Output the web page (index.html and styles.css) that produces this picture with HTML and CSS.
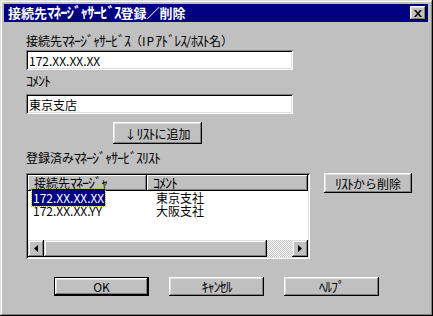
FILE: index.html
```html
<!DOCTYPE html>
<html lang="ja">
<head>
    <meta charset="UTF-8">
    <title>接続先ﾏﾈｰｼﾞｬｻｰﾋﾞｽ登録／削除</title>
    <link rel="stylesheet" href="styles.css">
</head>
<body>

<div class="dialog">
    <!-- Title bar -->
    <div class="titlebar">
        <span class="title">接続先<span class="hk">ﾏﾈｰｼﾞｬｻｰﾋﾞｽ</span>登録／削除</span>
        <button class="close-btn" aria-label="閉じる">
            <svg width="8" height="7" viewBox="0 0 8 7">
                <path d="M0 0h2l2 2.5 2-2.5h2l-3 3.5 3 3.5h-2l-2-2.5-2 2.5h-2l3-3.5z" fill="#000"/>
            </svg>
        </button>
    </div>

    <div class="content">
        <div class="label label-host">接続先<span class="hk">ﾏﾈｰｼﾞｬｻｰﾋﾞｽ</span>（<span class="ip">IP</span><span class="hk">ｱﾄﾞﾚｽ</span>/<span class="hk">ﾎｽﾄ</span>名）</div>
        <input class="field field-host" type="text" value="172.XX.XX.XX">

        <div class="label label-comment"><span class="hk">ｺﾒﾝﾄ</span></div>
        <input class="field field-comment" type="text" value="東京支店">

        <button class="btn btn-add">↓<span class="hk">ﾘｽﾄ</span>に追加</button>

        <div class="label label-list">登録済み<span class="hk">ﾏﾈｰｼﾞｬｻｰﾋﾞｽﾘｽﾄ</span></div>

        <div class="list-row">
            <div class="listview">
                <div class="lv-head">
                    <div class="lv-col col-host">接続先<span class="hk">ﾏﾈｰｼﾞｬ</span></div>
                    <div class="lv-col col-comment"><span class="hk">ｺﾒﾝﾄ</span></div>
                </div>
                <div class="lv-body">
                    <div class="lv-item">
                        <div class="col-host"><span class="selected">172.XX.XX.XX</span></div>
                        <div class="col-comment">東京支社</div>
                    </div>
                    <div class="lv-item">
                        <div class="col-host"><span>172.XX.XX.YY</span></div>
                        <div class="col-comment">大阪支社</div>
                    </div>
                </div>
                <div class="hscroll">
                    <div class="sb-btn">
                        <svg width="4" height="7" viewBox="0 0 4 7"><path d="M4 0v7L0 3.5z" fill="#000"/></svg>
                    </div>
                    <div class="sb-thumb"></div>
                    <div class="sb-track"></div>
                    <div class="sb-btn">
                        <svg width="4" height="7" viewBox="0 0 4 7"><path d="M0 0v7l4-3.5z" fill="#000"/></svg>
                    </div>
                </div>
            </div>
            <button class="btn btn-remove"><span class="hk">ﾘｽﾄ</span>から削除</button>
        </div>

        <div class="buttons">
            <button class="btn btn-default">OK</button>
            <button class="btn"><span class="hk">ｷｬﾝｾﾙ</span></button>
            <button class="btn"><span class="hk">ﾍﾙﾌﾟ</span></button>
        </div>
    </div>
</div>

</body>
</html>
```

FILE: styles.css
```css
body {
    margin: 0;
    padding: 0;
    font-family: "Noto Sans CJK JP", "Noto Sans", sans-serif;
    font-size: 12px;
    background-color: #c0c0c0;
}

.hk {
    font-size: 14px;
    letter-spacing: -1px;
    line-height: 1;
}

.ip {
    letter-spacing: 1px;
}

/* Dialog window with the raised 3D frame */
.dialog {
    width: 433px;
    height: 316px;
    box-sizing: border-box;
    padding: 4px 5px 0 4px;
    background-color: #c0c0c0;
    box-shadow: inset -1px -1px #000, inset 1px 1px #dfdfdf,
                inset -2px -2px #808080, inset 2px 2px #fff;
}

.titlebar {
    display: flex;
    justify-content: space-between;
    align-items: center;
    height: 18px;
    background-color: #000080;
    padding: 0 2px 0 4px;
}

.title {
    color: #fff;
    font-weight: bold;
    font-size: 13px;
    line-height: 18px;
}

.title .hk {
    font-size: 15px;
    letter-spacing: -1px;
}

.close-btn {
    width: 16px;
    height: 14px;
    padding: 0;
    border: none;
    display: flex;
    align-items: center;
    justify-content: center;
    background-color: #c0c0c0;
    box-shadow: inset -1px -1px #000, inset 1px 1px #fff,
                inset -2px -2px #808080, inset 2px 2px #dfdfdf;
}

.content {
    padding-left: 22px;
}

.label {
    height: 14px;
    line-height: 14px;
    color: #000;
}

.label-host {
    margin-top: 11px;
}

.label-comment {
    margin-top: 3px;
}

.label-list {
    margin-top: 6px;
}

/* Sunken edit fields */
.field {
    display: block;
    width: 267px;
    height: 20px;
    box-sizing: border-box;
    margin: 3px 0 0 0;
    padding: 0 3px;
    border: none;
    outline: none;
    font-family: inherit;
    font-size: 12px;
    color: #000;
    background-color: #fff;
    box-shadow: inset 1px 1px #808080, inset -1px -1px #fff,
                inset 2px 2px #000, inset -2px -2px #dfdfdf;
}

.field-comment {
    margin-top: 7px;
}

.btn {
    height: 20px;
    padding: 0;
    border: none;
    font-family: inherit;
    font-size: 12px;
    line-height: 14px;
    color: #000;
    background-color: #c0c0c0;
    box-shadow: inset -1px -1px #000, inset 1px 1px #fff,
                inset -2px -2px #808080, inset 2px 2px #dfdfdf;
}

.btn-add {
    display: block;
    width: 89px;
    height: 22px;
    margin: 8px 0 0 87px;
}

.btn-default {
    box-shadow: inset 0 0 0 1px #000, inset -2px -2px #000, inset 2px 2px #fff,
                inset -3px -3px #808080, inset 3px 3px #dfdfdf;
}

.list-row {
    display: flex;
    align-items: flex-start;
    margin-top: 9px;
}

/* List view */
.listview {
    width: 284px;
    height: 86px;
    box-sizing: border-box;
    padding: 2px;
    display: flex;
    flex-direction: column;
    background-color: #fff;
    box-shadow: inset 1px 1px #808080, inset -1px -1px #fff,
                inset 2px 2px #000, inset -2px -2px #dfdfdf;
}

.lv-head {
    display: flex;
    height: 16px;
}

.lv-col {
    box-sizing: border-box;
    height: 16px;
    line-height: 16px;
    padding-left: 6px;
    background-color: #c0c0c0;
    box-shadow: inset -1px -1px #000, inset 1px 1px #fff,
                inset -2px -2px #808080;
}

.col-host {
    width: 119px;
}

.col-comment {
    flex: 1;
}

.lv-body {
    flex: 1;
}

.lv-item {
    display: flex;
    height: 13px;
    line-height: 13px;
}

.lv-item .col-host {
    padding-left: 4px;
}

.lv-item .col-comment {
    padding-left: 5px;
}

.lv-item span {
    padding: 0 1px;
}

.selected {
    background-color: #000080;
    color: #fff;
    outline: 1px dotted #c0c000;
}

/* Horizontal scroll bar */
.hscroll {
    display: flex;
    height: 17px;
}

.sb-btn {
    width: 16px;
    display: flex;
    align-items: center;
    justify-content: center;
    background-color: #c0c0c0;
    box-shadow: inset -1px -1px #000, inset 1px 1px #dfdfdf,
                inset -2px -2px #808080, inset 2px 2px #fff;
}

.sb-thumb {
    width: 223px;
    background-color: #c0c0c0;
    box-shadow: inset -1px -1px #000, inset 1px 1px #dfdfdf,
                inset -2px -2px #808080, inset 2px 2px #fff;
}

.sb-track {
    flex: 1;
    background: repeating-conic-gradient(#c0c0c0 0 25%, #fff 0 50%) 0 0 / 2px 2px;
}

.btn-remove {
    width: 88px;
    margin-left: 14px;
}

.buttons {
    display: flex;
    gap: 20px;
    margin: 18px 0 0 28px;
}

.buttons .btn {
    width: 95px;
    height: 19px;
}
```
